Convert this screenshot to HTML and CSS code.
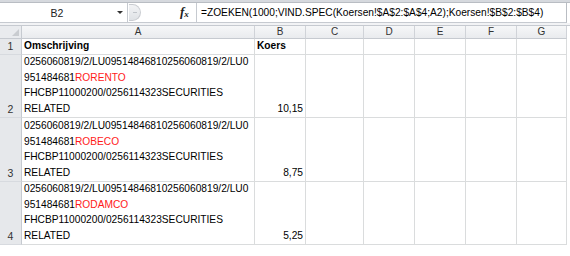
FILE: index.html
```html
<!DOCTYPE html>
<html>
<head>
<meta charset="utf-8">
<link rel="stylesheet" href="styles.css">
</head>
<body>
<div class="app">
  <div class="topband"></div>
  <div class="fbar">
    <div class="namebox">
      <span class="name">B2</span>
      <span class="drop"></span>
    </div>
    <div class="fbtns">
      <span class="pill"><span class="dash"></span></span>
      <span class="fx">f<span class="x">x</span></span>
    </div>
    <div class="formula">=ZOEKEN(1000;VIND.SPEC(Koersen!$A$2:$A$4;A2);Koersen!$B$2:$B$4)</div>
  </div>
  <div class="gap"></div>
  <div class="sheet">
    <div class="corner"><span class="tri"></span></div>
    <div class="ch">A</div>
    <div class="ch">B</div>
    <div class="ch">C</div>
    <div class="ch">D</div>
    <div class="ch">E</div>
    <div class="ch">F</div>
    <div class="ch last">G</div>

    <div class="rh">1</div>
    <div class="c b">Omschrijving</div>
    <div class="c b">Koers</div>
    <div class="c"></div><div class="c"></div><div class="c"></div><div class="c"></div><div class="c last"></div>

    <div class="rh">2</div>
    <div class="c wrap"><div>0256060819/2/LU09514846810256060819/2/LU0</div><div>951484681<span class="red">RORENTO</span></div><div>FHCBP11000200/0256114323SECURITIES</div><div>RELATED</div></div>
    <div class="c num">10,15</div>
    <div class="c"></div><div class="c"></div><div class="c"></div><div class="c"></div><div class="c last"></div>

    <div class="rh">3</div>
    <div class="c wrap"><div>0256060819/2/LU09514846810256060819/2/LU0</div><div>951484681<span class="red">ROBECO</span></div><div>FHCBP11000200/0256114323SECURITIES</div><div>RELATED</div></div>
    <div class="c num">8,75</div>
    <div class="c"></div><div class="c"></div><div class="c"></div><div class="c"></div><div class="c last"></div>

    <div class="rh">4</div>
    <div class="c wrap"><div>0256060819/2/LU09514846810256060819/2/LU0</div><div>951484681<span class="red">RODAMCO</span></div><div>FHCBP11000200/0256114323SECURITIES</div><div>RELATED</div></div>
    <div class="c num">5,25</div>
    <div class="c"></div><div class="c"></div><div class="c"></div><div class="c"></div><div class="c last"></div>
  </div>
</div>
</body>
</html>
```

FILE: styles.css
```css
* { box-sizing: border-box; }
html, body { margin: 0; padding: 0; background: #ffffff; }
body {
  width: 570px;
  height: 256px;
  overflow: hidden;
  font-family: "Liberation Sans", Arial, sans-serif;
  font-size: 10.2px;
  color: #000;
}
.topband {
  height: 3px;
  background: #d6d9de;
  border-bottom: 1px solid #b9bdc3;
}
.fbar {
  display: flex;
  height: 20px;
  width: 567px;
  background: #fff;
  border-bottom: 1px solid #c6cad0;
  border-right: 1px solid #b9bdc3;
}
.namebox {
  width: 128px;
  display: flex;
  align-items: center;
  border-right: 1px solid #c6cad0;
}
.name {
  width: 114px;
  text-align: center;
  font-size: 10.5px;
  color: #222;
}
.drop {
  width: 0; height: 0;
  border-left: 3px solid transparent;
  border-right: 3px solid transparent;
  border-top: 3px solid #333;
  margin-left: 3px;
}
.fbtns {
  width: 69px;
  display: flex;
  align-items: center;
  border-right: 1px solid #c6cad0;
  background: #fff;
}
.pill {
  width: 12px;
  height: 17px;
  margin-left: 1px;
  border: 1px solid #c9ccd1;
  border-left: none;
  border-radius: 0 9px 9px 0;
  background: linear-gradient(#f2f3f5, #dfe2e6);
  display: flex;
  align-items: center;
  justify-content: center;
}
.dash {
  width: 4px; height: 1px; background: #c0c4ca;
}
.fx {
  margin-left: 39px;
  font-family: "Liberation Serif", serif;
  font-style: italic;
  font-weight: bold;
  font-size: 13px;
  color: #222;
  line-height: 14px;
}
.fx .x { font-size: 9px; position: relative; top: 1px; }
.formula {
  padding-left: 4px;
  display: flex;
  align-items: center;
  font-size: 10.2px;
  color: #000;
  white-space: nowrap;
}
.gap {
  height: 3px;
  background: #f2f3f5;
  border-bottom: 1px solid #c6cad0;
}
.sheet {
  display: grid;
  grid-template-columns: 22px 233px 51px 58px 51px 51px 51px 50px;
  grid-template-rows: 13px 16px 63px 64px 63px;
}
.corner {
  background: #e9ebee;
  border-right: 1px solid #c6cad0;
  border-bottom: 1px solid #c6cad0;
  position: relative;
}
.tri {
  position: absolute;
  right: 2px;
  bottom: 2px;
  width: 0; height: 0;
  border-left: 7px solid transparent;
  border-bottom: 7px solid #c9ccd0;
}
.ch {
  background: linear-gradient(#f6f7f8, #e9ebee);
  border-right: 1px solid #d0d3d8;
  border-bottom: 1px solid #c6cad0;
  text-align: center;
  font-size: 10px;
  line-height: 12px;
  color: #333;
}
.rh {
  background: #e6e8eb;
  border-right: 1px solid #c6cad0;
  border-bottom: 1px solid #d7dadf;
  display: flex;
  align-items: flex-end;
  justify-content: center;
  padding-bottom: 1px;
  font-size: 10.5px;
  color: #333;
  line-height: 14px;
}
.c {
  border-right: 1px solid #dadcdd;
  border-bottom: 1px solid #dadcdd;
  padding: 0 2px 1px 2px;
  display: flex;
  flex-direction: column;
  justify-content: flex-end;
  line-height: 15.5px;
  white-space: nowrap;
}
.b { font-weight: bold; line-height: 14px; }
.num { text-align: right; align-items: flex-end; }
.red { color: #ff1a1a; }
```
